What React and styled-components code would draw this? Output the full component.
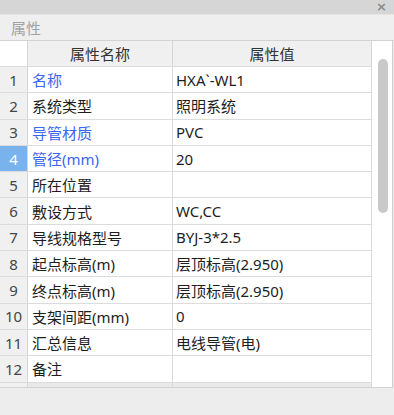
import React from 'react';
import styled, { createGlobalStyle } from 'styled-components';

const GlobalStyle = createGlobalStyle`
  html, body {
    margin: 0;
    padding: 0;
    background: #ededed;
  }
  body {
    font-family: "Noto Sans", "Noto Sans CJK SC", sans-serif;
  }
`;

const Window = styled.div`
  width: 394px;
  height: 415px;
  background: #ededed;
  display: flex;
  flex-direction: column;
  overflow: hidden;
`;

const TitleBar = styled.div`
  height: 14px;
  flex: none;
  background: #d6d6d6;
  display: flex;
  align-items: center;
  justify-content: flex-end;
  padding-right: 7px;
`;

const CloseButton = styled.span`
  font-family: "DejaVu Sans", sans-serif;
  font-size: 13px;
  font-weight: bold;
  line-height: 14px;
  color: #8a8a8a;
`;

const PanelHeader = styled.div`
  flex: none;
  background: #efefef;
  border-top: 1px solid #e4e4e4;
  border-bottom: 1px solid #d2d2d2;
  box-sizing: border-box;
  height: 27px;
  display: flex;
  align-items: center;
  padding-left: 11px;
  font-size: 15px;
  color: #a2a2a2;
`;

const GridArea = styled.div`
  height: 347px;
  flex: none;
  display: flex;
  width: 393px;
  border-right: 1px solid #cfcfcf;
  border-bottom: 1px solid #d4d4d4;
  box-sizing: border-box;
  background: #ffffff;
  overflow: hidden;
`;

const Table = styled.div`
  width: 372px;
  flex: none;
  display: flex;
  flex-direction: column;
`;

const Row = styled.div`
  display: grid;
  grid-template-columns: 28px 145px 199px;
  height: ${p => p.$h}px;
  flex: none;
  box-sizing: border-box;
  border-bottom: 1px solid #dcdcdc;
  background: ${p => (p.$stub ? '#e9e9e9' : '#ffffff')};
`;

const NumCell = styled.div`
  display: flex;
  align-items: center;
  justify-content: center;
  border-right: 1px solid #d6d6d6;
  background: ${p => (p.$selected ? '#78b3ee' : p.$blank ? '#ffffff' : '#f0f0f0')};
  color: ${p => (p.$selected ? '#ffffff' : '#454545')};
  font-size: 15px;
`;

const HeadCell = styled.div`
  display: flex;
  align-items: center;
  justify-content: center;
  background: #f0f0f0;
  border-right: 1px solid #d6d6d6;
  color: #333333;
  font-size: 15px;
`;

const Cell = styled.div`
  display: flex;
  align-items: center;
  padding-left: ${p => (p.$value ? 3 : 4)}px;
  border-right: 1px solid #dadada;
  color: ${p => (p.$link ? '#3a66f0' : '#1e1e1e')};
  font-size: 15px;
  white-space: nowrap;
  overflow: hidden;
`;

const ScrollTrack = styled.div`
  width: 20px;
  flex: none;
  background: #ffffff;
  padding-top: 18px;
  box-sizing: border-box;
  display: flex;
  justify-content: center;
`;

const Thumb = styled.div`
  width: 10px;
  height: 154px;
  margin-left: 2px;
  border-radius: 5px;
  background: #c9c9c9;
`;

const rows = [
  { name: '名称', value: 'HXA`-WL1', link: true },
  { name: '系统类型', value: '照明系统' },
  { name: '导管材质', value: 'PVC', link: true },
  { name: '管径(mm)', value: '20', link: true, selected: true },
  { name: '所在位置', value: '' },
  { name: '敷设方式', value: 'WC,CC' },
  { name: '导线规格型号', value: 'BYJ-3*2.5' },
  { name: '起点标高(m)', value: '层顶标高(2.950)' },
  { name: '终点标高(m)', value: '层顶标高(2.950)' },
  { name: '支架间距(mm)', value: '0' },
  { name: '汇总信息', value: '电线导管(电)' },
  { name: '备注', value: '' },
];

export default function App() {
  return (
    <Window>
      <GlobalStyle />
      <TitleBar>
        <CloseButton>×</CloseButton>
      </TitleBar>
      <PanelHeader>属性</PanelHeader>
      <GridArea>
        <Table>
          <Row $h={26}>
            <NumCell $blank />
            <HeadCell>属性名称</HeadCell>
            <HeadCell>属性值</HeadCell>
          </Row>
          {rows.map((r, i) => (
            <Row key={i} $h={26.3}>
              <NumCell $selected={r.selected}>{i + 1}</NumCell>
              <Cell $link={r.link}>{r.name}</Cell>
              <Cell $value>{r.value}</Cell>
            </Row>
          ))}
          <Row $h={10} $stub>
            <NumCell />
            <Cell />
            <Cell $value />
          </Row>
        </Table>
        <ScrollTrack>
          <Thumb />
        </ScrollTrack>
      </GridArea>
    </Window>
  );
}
